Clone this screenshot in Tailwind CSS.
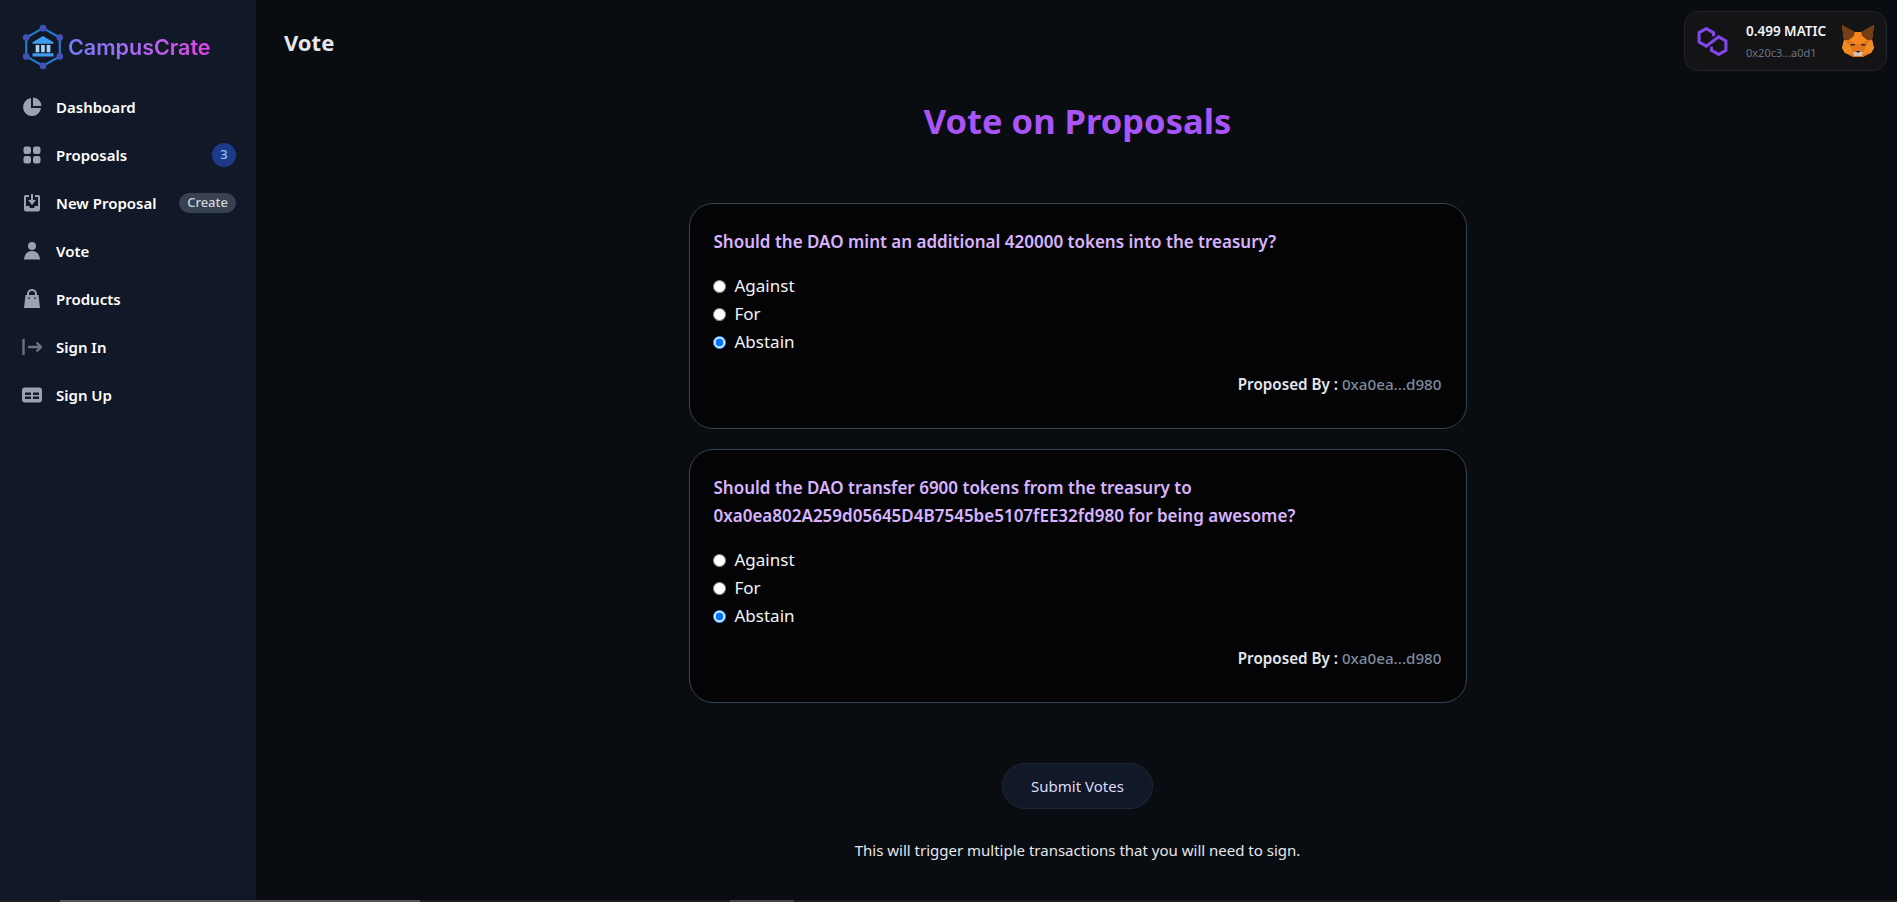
<!DOCTYPE html>
<html lang="en">
<head>
    <meta charset="UTF-8">
    <title>Vote</title>
    <script src="https://cdn.jsdelivr.net/npm/@tailwindcss/browser@4"></script>
</head>
<body class="bg-[#090c10] font-['Noto_Sans',sans-serif] text-white overflow-hidden">
    <div class="flex h-[902px] relative">
        <!-- Sidebar -->
        <aside class="w-[256px] shrink-0 bg-[#111827] px-[22px] pt-[24px]">
            <div class="flex items-center h-[46px] mb-[13px]">
                <svg class="w-[44px] h-[46px] ml-[-1px] shrink-0" viewBox="0 0 42 44" preserveAspectRatio="none">
                    <polygon points="21,4 37,13 37,31 21,40 5,31 5,13" fill="none" stroke="#1f7fd6" stroke-width="2"/>
                    <g fill="#4450b8">
                        <circle cx="21" cy="4" r="3.2"/><circle cx="37" cy="13" r="3.2"/><circle cx="37" cy="31" r="3.2"/>
                        <circle cx="21" cy="40" r="3.2"/><circle cx="5" cy="31" r="3.2"/><circle cx="5" cy="13" r="3.2"/>
                    </g>
                    <path d="M21 11.500 L31 17.500 V19 H11 V17.500 Z M11 28 H31 V31 H11 Z" fill="#3f9cf0"/>
                    <path d="M14 20 h3.500 v7 h-3.500 z M19.200 20 h3.500 v7 h-3.500 z M24.500 20 h3.500 v7 h-3.500 z" fill="#a5d4fb"/>
                </svg>
                <span class="ml-[3px] font-['Inter',sans-serif] text-[21.500px] font-semibold bg-gradient-to-r from-[#6f7bf7] to-[#e040e8] bg-clip-text text-transparent">CampusCrate</span>
            </div>
            <nav class="flex flex-col text-[15px] font-semibold">
                <a class="flex items-center h-[48px]">
                    <svg class="w-5 h-5 shrink-0 text-[#9ca3af]" viewBox="0 0 20 20" fill="currentColor"><path d="M9 1.100A9 9 0 1 0 19 11h-10z"/><path d="M11 0.500V9h8.500A9 9 0 0 0 11 0.500z"/></svg>
                    <span class="ml-[14px]">Dashboard</span>
                </a>
                <a class="flex items-center h-[48px]">
                    <svg class="w-5 h-5 shrink-0 text-[#9ca3af]" viewBox="0 0 20 20" fill="currentColor"><rect x="1.500" y="1.500" width="7.500" height="7.500" rx="2.200"/><rect x="11" y="1.500" width="7.500" height="7.500" rx="2.200"/><rect x="1.500" y="11" width="7.500" height="7.500" rx="2.200"/><rect x="11" y="11" width="7.500" height="7.500" rx="2.200"/></svg>
                    <span class="ml-[14px] flex-1">Proposals</span>
                    <span class="w-6 h-6 mr-[-2px] rounded-full bg-[#1e3a8a] text-[#93c5fd] text-[13px] font-medium flex items-center justify-center">3</span>
                </a>
                <a class="flex items-center h-[48px]">
                    <svg class="w-5 h-5 shrink-0 text-[#9ca3af]" viewBox="0 0 20 20" fill="currentColor"><path d="M3.500 2H7v2H4v9h3l1 2h4l1-2h3V4h-3V2h3.500A1.500 1.500 0 0 1 18 3.500v13a2 2 0 0 1-2 2H4a2 2 0 0 1-2-2v-13A1.500 1.500 0 0 1 3.500 2z"/><path d="M9 1h2v6h3l-4 5-4-5h3z"/></svg>
                    <span class="ml-[14px] flex-1">New Proposal</span>
                    <span class="h-5 px-[8px] mr-[-2px] rounded-full bg-[#374151] text-[#d1d5db] text-[13px] font-medium flex items-center">Create</span>
                </a>
                <a class="flex items-center h-[48px]">
                    <svg class="w-5 h-5 shrink-0 text-[#9ca3af]" viewBox="0 0 20 20" fill="currentColor"><circle cx="10" cy="5" r="4"/><path d="M10 10c-4.500 0-7.500 3-8 8.500h16c-.5-5.500-3.500-8.500-8-8.500z"/></svg>
                    <span class="ml-[14px]">Vote</span>
                </a>
                <a class="flex items-center h-[48px]">
                    <svg class="w-5 h-5 shrink-0 text-[#9ca3af]" viewBox="0 0 20 20" fill="currentColor" fill-rule="evenodd"><path d="M10 0a5 5 0 0 0-5 5v1H3.500L2 19h16L16.500 6H15V5a5 5 0 0 0-5-5zM7 6V5a3 3 0 0 1 6 0v1zM6.200 8.500h1.500V10H6.200zM12.300 8.500h1.500V10h-1.500z"/></svg>
                    <span class="ml-[14px]">Products</span>
                </a>
                <a class="flex items-center h-[48px]">
                    <svg class="w-5 h-5 shrink-0 text-[#6b7280]" viewBox="0 0 20 20" fill="none" stroke="currentColor" stroke-width="2.400"><path d="M1.500 2v16"/><path d="M6 10H19M14.500 5.500 19 10l-4.500 4.500"/></svg>
                    <span class="ml-[14px]">Sign In</span>
                </a>
                <a class="flex items-center h-[48px]">
                    <svg class="w-5 h-5 shrink-0 text-[#9ca3af]" viewBox="0 0 20 20" fill="currentColor" fill-rule="evenodd"><path d="M3 2.500h14a3 3 0 0 1 3 3v9a3 3 0 0 1-3 3H3a3 3 0 0 1-3-3v-9a3 3 0 0 1 3-3zM3 7.500v2.500h6V7.500zM11 7.500v2.500h6V7.500zM3 11.500V14h6v-2.500zM11 11.500V14h6v-2.500z"/></svg>
                    <span class="ml-[14px]">Sign Up</span>
                </a>
            </nav>
        </aside>

        <!-- Main -->
        <main class="flex-1 relative">
            <div class="flex items-start justify-between pl-[28px] pr-[10px] pt-[11px]">
                <h1 class="text-[22px] font-bold text-[#e5e7eb] mt-[16px] leading-[30px]">Vote</h1>
                <div class="flex items-center w-[203px] h-[60px] rounded-[14px] bg-[#141416] border border-[#222327]">
                    <svg class="w-[33px] h-[29px] ml-[11px] shrink-0" viewBox="0 0 32 28" fill="none" stroke="#8247e5" stroke-width="3"><path d="M17 9V5.500L10 1.500 3 5.500V14.500L10 18.500 22 9.500 29 13.500V22.500L22 26.500 15 22.500V19"/></svg>
                    <div class="ml-[17px] flex-1">
                        <p class="text-[13.500px] font-semibold leading-[18px] text-[#f3f4f6]">0.499 MATIC</p>
                        <p class="text-[11px] leading-[16px] mt-[5px] text-[#6b7280]">0x20c3...a0d1</p>
                    </div>
                    <svg class="w-[32px] h-[32px] mr-[12px] shrink-0" viewBox="0 0 32 32">
                        <polygon points="0,0 12,7 20,7 32,0 30,15 32,23 29,28 21,32 11,32 3,28 0,23 2,15" fill="#e2761b"/>
                        <polygon points="0,0 13,7 12,11 7,15 2,15" fill="#763d16"/>
                        <polygon points="32,0 19,7 20,11 25,15 30,15" fill="#763d16"/>
                        <polygon points="13,7 19,7 20,11 25,15 19,19 13,19 7,15 12,11" fill="#f6851b"/>
                        <polygon points="0,23 2,15 8,20 11,29 3,28" fill="#f08a24"/>
                        <polygon points="32,23 30,15 24,20 21,29 29,28" fill="#f08a24"/>
                        <polygon points="13,19 19,19 21,26 16,27 11,26" fill="#e4751f"/>
                        <polygon points="11,27 21,27 20,31 12,31" fill="#d7c1b3"/>
                        <polygon points="13.500,26 18.500,26 16,28" fill="#233447"/>
                        <rect x="8.500" y="19" width="4.500" height="1.500" fill="#3a2a1e"/>
                        <rect x="19" y="19" width="4.500" height="1.500" fill="#3a2a1e"/>
                    </svg>
                </div>
            </div>

            <div class="pl-[2px]">
                <h2 class="mt-[24px] text-center text-[34.500px] leading-[52px] font-bold text-[#a855f7]">Vote on Proposals</h2>

                <div class="w-[778px] mx-auto mt-[56px] flex flex-col gap-[20px]">
                    <div class="h-[226px] rounded-[24px] border border-[#374151] bg-[#040407] px-[24px] pt-[24px]">
                        <p class="text-[17px] leading-[28px] font-semibold text-[#d8b4fe]">Should the DAO mint an additional 420000 tokens into the treasury?</p>
                        <div class="mt-[16px] flex flex-col text-[17px] leading-[28px] text-[#f3f4f6]">
                            <label class="flex items-center"><input type="radio" name="p1" class="w-[13px] h-[13px] m-0 ml-[-1px] mr-[9px] accent-[#0075ff]">Against</label>
                            <label class="flex items-center"><input type="radio" name="p1" class="w-[13px] h-[13px] m-0 ml-[-1px] mr-[9px] accent-[#0075ff]">For</label>
                            <label class="flex items-center"><input type="radio" name="p1" checked class="w-[13px] h-[13px] m-0 ml-[-1px] mr-[9px] accent-[#0075ff]">Abstain</label>
                        </div>
                        <p class="mt-[16px] text-right text-[15.200px] leading-[24px] font-semibold text-[#e5e7eb]">Proposed By : <span class="font-medium text-[#7f8a9a]">0xa0ea...d980</span></p>
                    </div>
                    <div class="h-[254px] rounded-[24px] border border-[#374151] bg-[#040407] px-[24px] pt-[24px]">
                        <p class="text-[17px] leading-[28px] font-semibold text-[#d8b4fe]">Should the DAO transfer 6900 tokens from the treasury to<br>0xa0ea802A259d05645D4B7545be5107fEE32fd980 for being awesome?</p>
                        <div class="mt-[16px] flex flex-col text-[17px] leading-[28px] text-[#f3f4f6]">
                            <label class="flex items-center"><input type="radio" name="p2" class="w-[13px] h-[13px] m-0 ml-[-1px] mr-[9px] accent-[#0075ff]">Against</label>
                            <label class="flex items-center"><input type="radio" name="p2" class="w-[13px] h-[13px] m-0 ml-[-1px] mr-[9px] accent-[#0075ff]">For</label>
                            <label class="flex items-center"><input type="radio" name="p2" checked class="w-[13px] h-[13px] m-0 ml-[-1px] mr-[9px] accent-[#0075ff]">Abstain</label>
                        </div>
                        <p class="mt-[16px] text-right text-[15.200px] leading-[24px] font-semibold text-[#e5e7eb]">Proposed By : <span class="font-medium text-[#7f8a9a]">0xa0ea...d980</span></p>
                    </div>
                </div>

                <div class="mt-[60px] flex justify-center">
                    <button class="w-[151px] h-[46px] rounded-full bg-[#111827] border border-[#1f2937] text-[15px] text-[#dcdcf8]">Submit Votes</button>
                </div>
                <p class="mt-[29px] text-center text-[15px] leading-[24px] text-[#e5e7eb]">This will trigger multiple transactions that you will need to sign.</p>
            </div>
        </main>

        <!-- browser scrollbar strip along the bottom -->
        <div class="absolute left-0 right-0 bottom-0 h-[2px] bg-[#1e1e1e]">
            <div class="absolute left-[60px] w-[360px] h-[2px] bg-[#555555]"></div>
            <div class="absolute left-[730px] w-[64px] h-[2px] bg-[#444444]"></div>
        </div>
    </div>
</body>
</html>
